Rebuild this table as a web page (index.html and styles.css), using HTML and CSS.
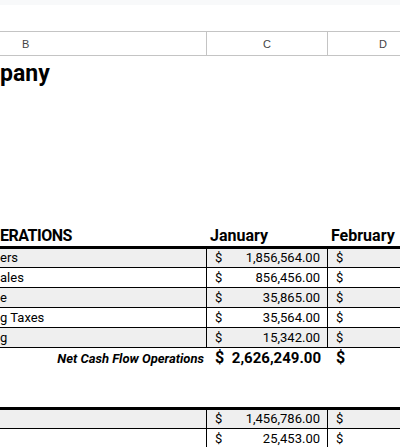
FILE: index.html
```html
<!DOCTYPE html>
<html lang="en">
<head>
  <meta charset="UTF-8" />
  <title>Cash Flow</title>
  <link rel="stylesheet" href="styles.css">
</head>
<body>
  <div class="topbar"></div>

  <div class="col-heads">
    <div class="col-head col-b">B</div>
    <div class="col-head">C</div>
    <div class="col-head">D</div>
  </div>

  <div class="title-block">
    <h1 class="title">pany</h1>
  </div>

  <!-- Operations -->
  <div class="section">
    <div class="sec-head">
      <div class="lbl">ERATIONS</div>
      <div class="mon">January</div>
      <div class="mon">February</div>
    </div>
    <div class="rows">
      <div class="row shade">
        <div class="lbl">ers</div>
        <div class="amt"><span>$</span><span>1,856,564.00</span></div>
        <div class="amt"><span>$</span></div>
      </div>
      <div class="row">
        <div class="lbl">ales</div>
        <div class="amt"><span>$</span><span>856,456.00</span></div>
        <div class="amt"><span>$</span></div>
      </div>
      <div class="row shade">
        <div class="lbl">e</div>
        <div class="amt"><span>$</span><span>35,865.00</span></div>
        <div class="amt"><span>$</span></div>
      </div>
      <div class="row">
        <div class="lbl">g Taxes</div>
        <div class="amt"><span>$</span><span>35,564.00</span></div>
        <div class="amt"><span>$</span></div>
      </div>
      <div class="row shade">
        <div class="lbl">g</div>
        <div class="amt"><span>$</span><span>15,342.00</span></div>
        <div class="amt"><span>$</span></div>
      </div>
    </div>
    <div class="total">
      <div class="lbl">Net Cash Flow Operations</div>
      <div class="amt"><span>$</span><span>2,626,249.00</span></div>
      <div class="amt"><span>$</span></div>
    </div>
  </div>

  <!-- Next section -->
  <div class="section second">
    <div class="rows">
      <div class="row shade">
        <div class="lbl"></div>
        <div class="amt"><span>$</span><span>1,456,786.00</span></div>
        <div class="amt"><span>$</span></div>
      </div>
      <div class="row last">
        <div class="lbl"></div>
        <div class="amt"><span>$</span><span>25,453.00</span></div>
        <div class="amt"><span>$</span></div>
      </div>
    </div>
  </div>
</body>
</html>
```

FILE: styles.css
```css
* { box-sizing: border-box; }
body {
  margin: 0;
  width: 400px;
  height: 447px;
  overflow: hidden;
  background: #fff;
  color: #000;
  font-family: Roboto, sans-serif;
}

.topbar { height: 5px; background: #f8f9fa; }

.col-heads {
  margin-top: 26px;
  display: grid;
  grid-template-columns: 207px 121px 72px;
  height: 25px;
  border-top: 1px solid #c4c4c4;
  border-bottom: 1px solid #c4c4c4;
}
.col-head {
  display: flex;
  align-items: center;
  justify-content: center;
  font-family: "Liberation Sans", Arial, sans-serif;
  font-size: 11px;
  color: #444;
  border-right: 1px solid #c4c4c4;
}
.col-head.col-b { justify-content: flex-start; padding-left: 22px; }
.col-head:last-child {
  border-right: none;
  justify-content: flex-start;
  padding-left: 51px;
}

.title-block { height: 167px; }
.title {
  margin: 0;
  font-size: 23px;
  font-weight: 700;
  line-height: 30px;
  padding-top: 3px;
}

/* sheet grid columns */
.sec-head, .row, .total {
  display: grid;
  grid-template-columns: 207px 121px 72px;
}

.sec-head {
  height: 26px;
  border-bottom: 3px solid #000;
  font-size: 16px;
  font-weight: 700;
  align-items: end;
  line-height: 20px;
}
.sec-head .lbl { letter-spacing: -0.5px; }
.sec-head .mon { padding-left: 3px; white-space: nowrap; }

.row {
  height: 20px;
  border-bottom: 1px solid #000;
  font-size: 13px;
  line-height: 19px;
}
.rows .row:first-child { height: 19px; line-height: 18px; }
.row.shade { background: #efefef; }
.row .lbl, .row .amt:nth-child(2) { border-right: 1px solid #000; }

.amt {
  display: flex;
  justify-content: space-between;
  padding: 0 7px 0 8px;
}

.total {
  height: 20px;
  align-items: center;
}
.total .lbl {
  text-align: right;
  padding-right: 3px;
  font-size: 13px;
  font-weight: 700;
  font-style: italic;
}
.total .amt {
  font-size: 15px;
  font-weight: 700;
  line-height: 20px;
}
.total .amt span:first-child { font-size: 16px; }

.second {
  margin-top: 39px;
  border-top: 3px solid #000;
}
.second .row.last { border-bottom-color: #d9d9d9; }
```
